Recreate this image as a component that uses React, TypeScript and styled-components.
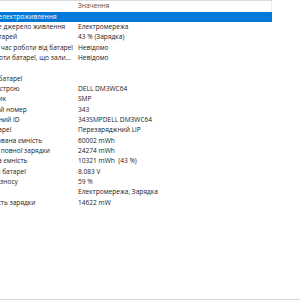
import React from "react";
import styled, { createGlobalStyle } from "styled-components";

type Row =
  | { kind: "group"; label: string; selected?: boolean }
  | { kind: "item"; label: string; value: string }
  | { kind: "blank" };

const rows: Row[] = [
  { kind: "group", label: "Властивості електроживлення", selected: true },
  { kind: "item", label: "Поточне джерело живлення", value: "Електромережа" },
  { kind: "item", label: "Стан батарей", value: "43 % (Зарядка)" },
  { kind: "item", label: "Повний час роботи від батареї", value: "Невідомо" },
  { kind: "item", label: "Час роботи батареї, що залишився", value: "Невідомо" },
  { kind: "blank" },
  { kind: "group", label: "Властивості батареї" },
  { kind: "item", label: "Ім'я пристрою", value: "DELL DM3WC64" },
  { kind: "item", label: "Виробник", value: "SMP" },
  { kind: "item", label: "Серійний номер", value: "343" },
  { kind: "item", label: "Унікальний ID", value: "343SMPDELL DM3WC64" },
  { kind: "item", label: "Тип батареї", value: "Перезаряджний LiP" },
  { kind: "item", label: "Проектована ємність", value: "60002 mWh" },
  { kind: "item", label: "Ємність повної зарядки", value: "24274 mWh" },
  { kind: "item", label: "Поточна ємність", value: "10321 mWh  (43 %)" },
  { kind: "item", label: "Напруга батареї", value: "8.083 V" },
  { kind: "item", label: "Ступінь зносу", value: "59 %" },
  { kind: "item", label: "Стан", value: "Електромережа, Зарядка" },
  { kind: "item", label: "Швидкість зарядки", value: "14622 mW" },
];

const GlobalStyle = createGlobalStyle`
  html, body {
    margin: 0;
    padding: 0;
    background: #ffffff;
  }
  body {
    font-family: "Open Sans", "Noto Sans", "Liberation Sans", sans-serif;
  }
`;

const App = () => {
  return (
    <>
      <GlobalStyle />
      <Viewport>
        <Table>
          <HeaderRow>
            <HeaderCell>Поле</HeaderCell>
            <HeaderCell $last>Значення</HeaderCell>
          </HeaderRow>
          {rows.map((row, index) => {
            if (row.kind === "blank") return <DataRow key={index} />;
            if (row.kind === "group")
              return (
                <DataRow key={index} $selected={row.selected}>
                  <GroupLabel>{row.label}</GroupLabel>
                  <Value />
                </DataRow>
              );
            return (
              <DataRow key={index}>
                <ItemLabel>{row.label}</ItemLabel>
                <Value>{row.value}</Value>
              </DataRow>
            );
          })}
        </Table>
        <BottomEdge />
      </Viewport>
    </>
  );
};

const Viewport = styled.div`
  width: 300px;
  height: 300px;
  overflow: hidden;
  display: flex;
  flex-direction: column;
  background: #ffffff;
`;

const Table = styled.div`
  flex: 1;
  margin-left: -60px;
  width: 400px;
  display: flex;
  flex-direction: column;
  font-size: 6.6px;
  color: #1a1a1a;
`;

const HeaderRow = styled.div`
  display: grid;
  grid-template-columns: 136px 196px;
  width: 332px;
  height: 10.5px;
  border-top: 1px solid #dcdcdc;
  color: #4d4d4d;
`;

const HeaderCell = styled.div<{ $last?: boolean }>`
  padding-left: 2px;
  line-height: 10.5px;
  white-space: nowrap;
  overflow: hidden;
  border-right: ${(p) => (p.$last ? "1px solid #ececec" : "none")};
`;

const DataRow = styled.div<{ $selected?: boolean }>`
  display: grid;
  grid-template-columns: 136px 196px;
  width: 332px;
  height: 10.35px;
  line-height: 10.35px;
  white-space: pre;
  background: ${(p) => (p.$selected ? "#0078d7" : "transparent")};
  color: ${(p) => (p.$selected ? "#ffffff" : "inherit")};
`;

const GroupLabel = styled.div`
  padding-left: 19px;
  padding-right: 3px;
  overflow: hidden;
  text-overflow: ellipsis;
`;

const ItemLabel = styled.div`
  padding-left: 34px;
  padding-right: 3px;
  overflow: hidden;
  text-overflow: ellipsis;
`;

const Value = styled.div`
  padding-left: 2px;
  overflow: hidden;
`;

const BottomEdge = styled.div`
  height: 1px;
  background: #d6d6d6;
`;

export default App;
